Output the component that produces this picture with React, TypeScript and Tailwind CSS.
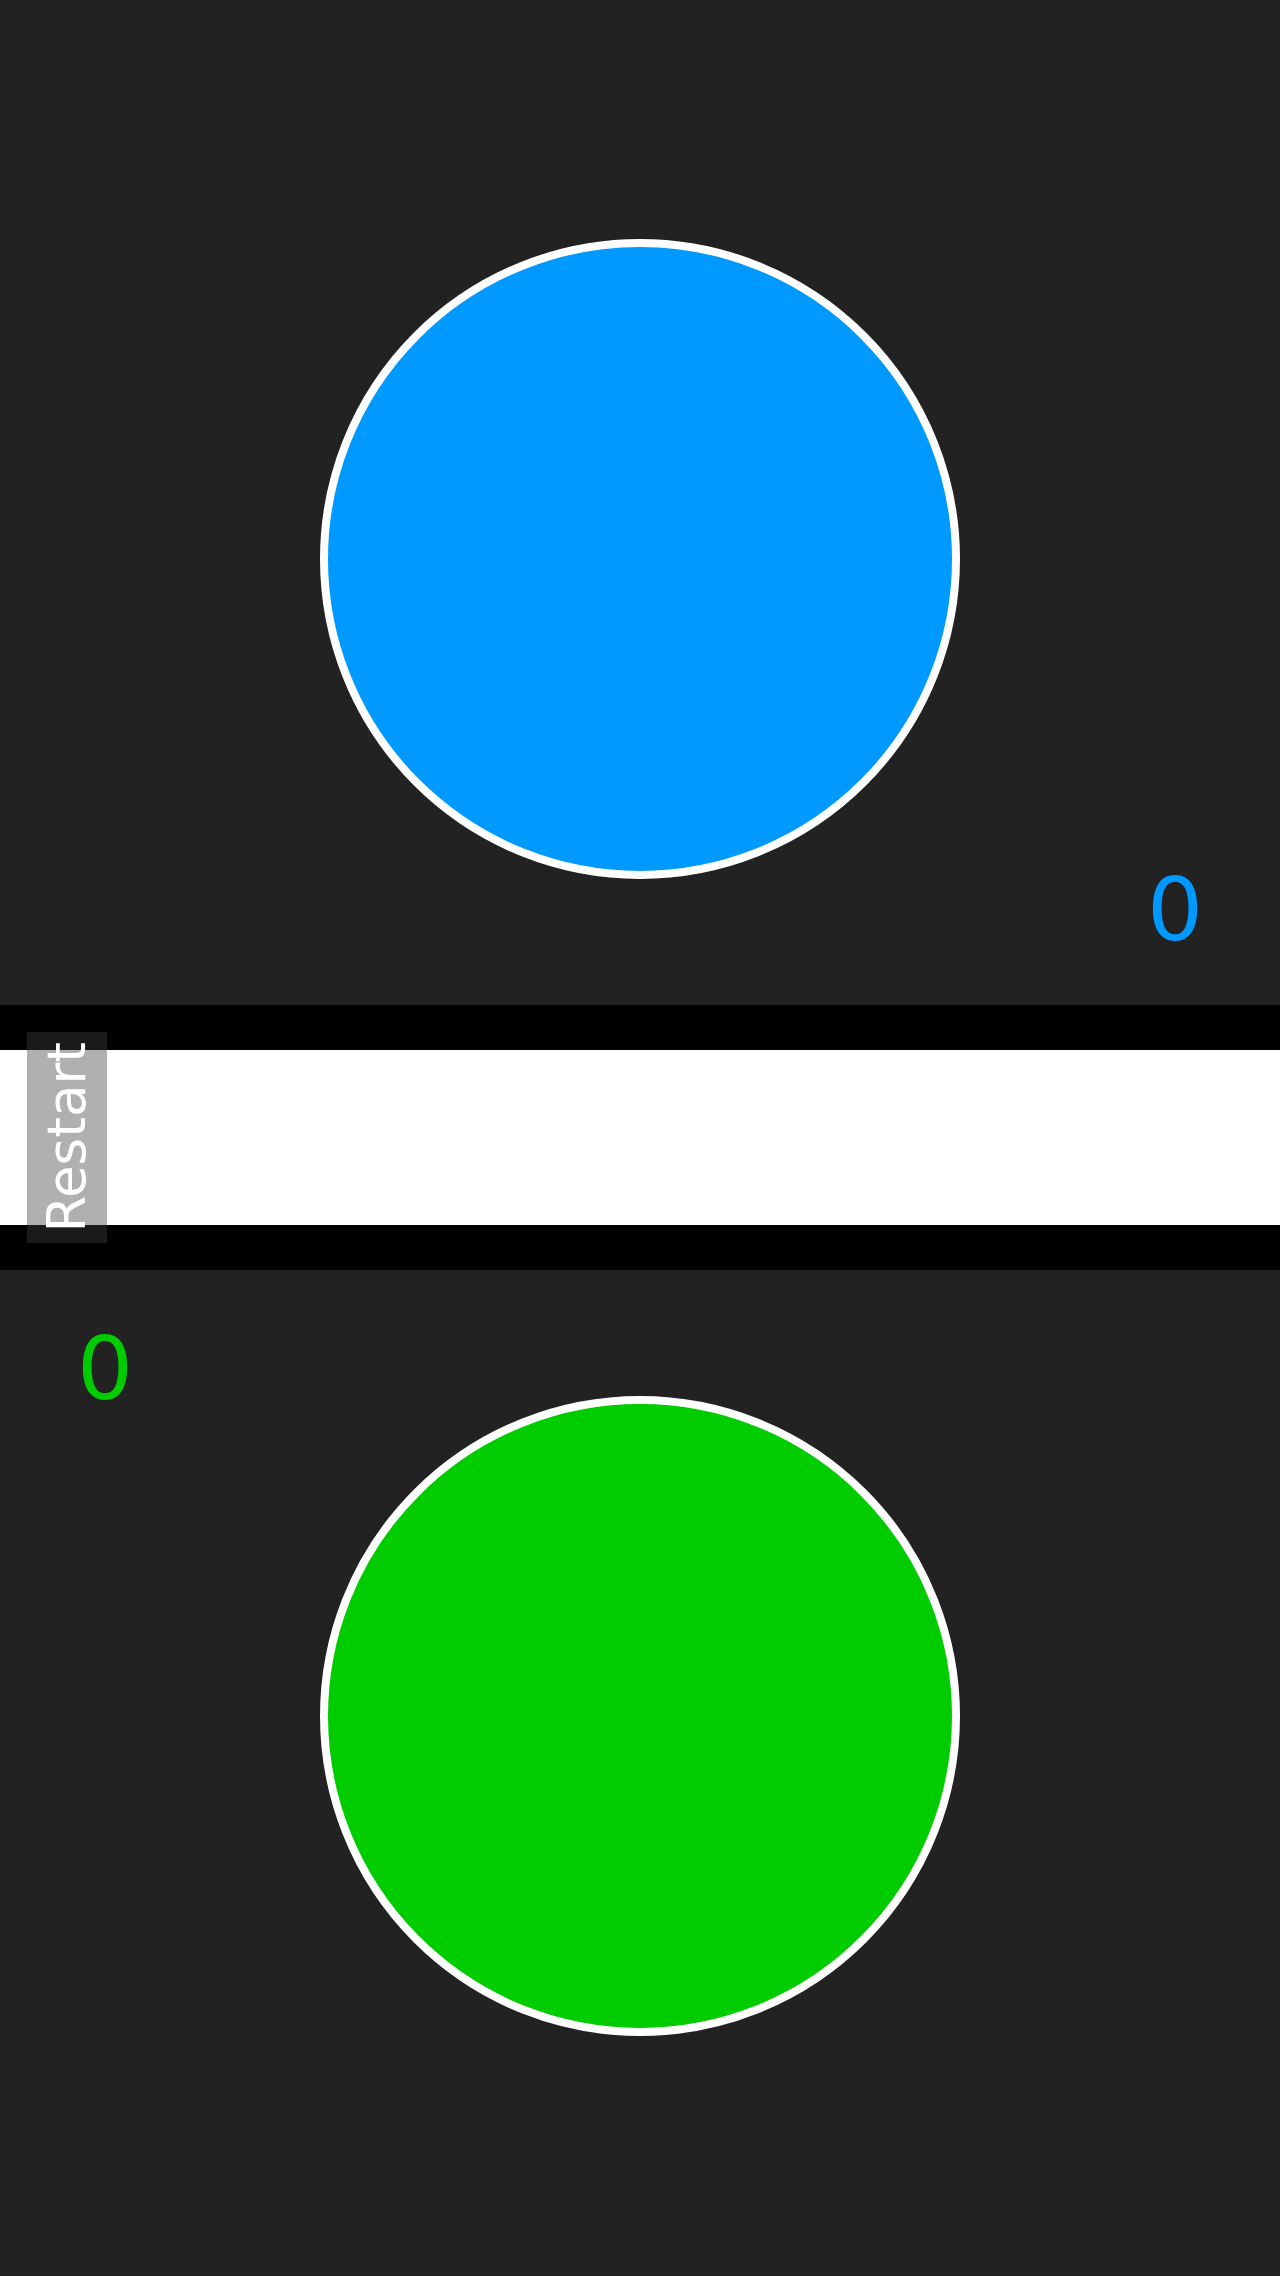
const font = { fontFamily: '"DejaVu Sans", Verdana, sans-serif' };

function PlayerSide(props: { color: "blue" | "green"; score: number; flipped?: boolean }) {
  const fill = props.color === "blue" ? "bg-[#0099ff]" : "bg-[#00cc00]";
  const text = props.color === "blue" ? "text-[#0099ff]" : "text-[#00cc00]";

  return (
    <section
      className={`relative flex h-[1005px] shrink-0 justify-center bg-[#222222] ${props.flipped ? "rotate-180" : ""}`}
    >
      <span className={`absolute left-[77px] top-[55px] text-[88px] leading-none ${text}`}>{props.score}</span>
      <button
        type="button"
        className={`mt-[126px] h-[640px] w-[640px] rounded-full border-[8px] border-white ${fill}`}
        aria-label={`${props.color} player`}
      />
    </section>
  );
}

export default function App() {
  return (
    <div className="flex h-[2276px] w-[1280px] flex-col overflow-hidden bg-[#222222]" style={font}>
      <PlayerSide color="blue" score={0} flipped />

      <div className="flex h-[265px] shrink-0 items-center border-y-[45px] border-black bg-white">
        <button
          type="button"
          className="ml-[27px] flex h-[211px] w-[80px] shrink-0 items-center justify-center bg-[rgba(63,63,63,0.41)] text-white"
        >
          <span className="rotate-180 whitespace-nowrap text-[53px] [writing-mode:vertical-rl]">Restart</span>
        </button>
      </div>

      <PlayerSide color="green" score={0} />
    </div>
  );
}
